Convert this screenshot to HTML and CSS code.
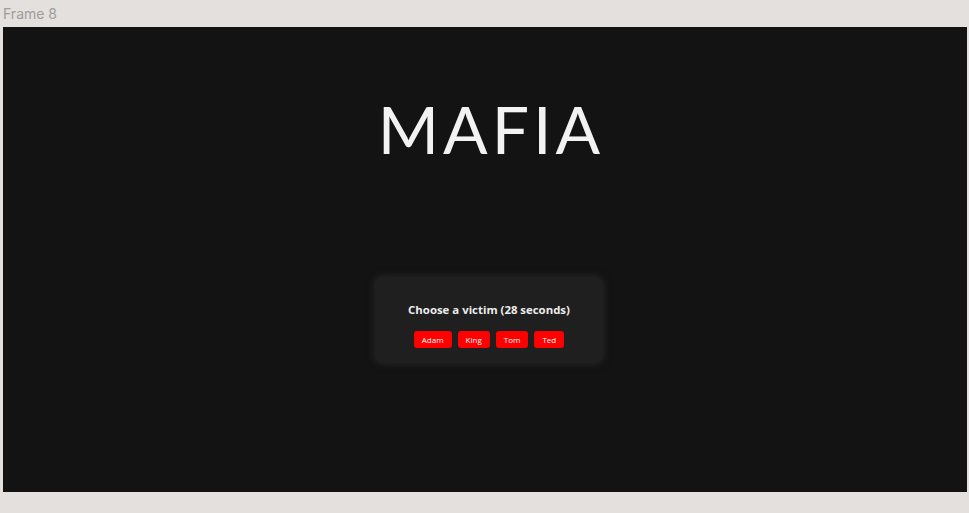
FILE: index.html
```html
<!DOCTYPE html>
<html>
<head>
<meta charset="utf-8">
<link rel="stylesheet" href="styles.css">
</head>
<body>
<div class="label">Frame 8</div>
<div class="frame">
  <h1 class="title">MAFIA</h1>
  <div class="card">
    <div class="prompt">Choose a victim (28 seconds)</div>
    <div class="buttons">
      <button class="btn">Adam</button>
      <button class="btn">King</button>
      <button class="btn">Tom</button>
      <button class="btn">Ted</button>
    </div>
  </div>
</div>
</body>
</html>
```
FILE: styles.css
```css
html, body {
  margin: 0;
  padding: 0;
  background: #e4e0de;
  width: 969px;
  height: 513px;
  overflow: hidden;
}
.label {
  height: 27px;
  padding-left: 3px;
  box-sizing: border-box;
  padding-top: 6px;
  font-family: "Inter", "Liberation Sans", sans-serif;
  font-size: 14px;
  color: #a09d9b;
  line-height: 16px;
}
.frame {
  margin-left: 3px;
  width: 964px;
  height: 465px;
  background: #131313;
  display: flex;
  flex-direction: column;
  align-items: center;
  padding-left: 8px;
  box-sizing: border-box;
}
.title {
  margin: 66px 0 0 0;
  font-family: "Lato", "Open Sans", sans-serif;
  font-weight: 400;
  font-size: 66px;
  line-height: 72px;
  letter-spacing: 4px;
  color: #f2f2f2;
  padding-left: 4px;
}
.card {
  margin-top: 112px;
  width: 228px;
  height: 86px;
  box-sizing: border-box;
  background: #1f1f1f;
  border-radius: 8px;
  box-shadow: 0 0 6px 2px rgba(40,40,40,0.7);
  display: flex;
  flex-direction: column;
  align-items: center;
  padding-top: 25px;
}
.prompt {
  font-family: "Open Sans", "Noto Sans", sans-serif;
  font-weight: 700;
  font-size: 11.4px;
  line-height: 16px;
  color: #ececec;
}
.buttons {
  display: flex;
  gap: 6px;
  margin-top: 13px;
}
.btn {
  border: none;
  background: #ff0000;
  color: #ffffff;
  border-radius: 3px;
  height: 17px;
  padding: 0 8px;
  font-family: "Open Sans", "Noto Sans", sans-serif;
  font-size: 8px;
  line-height: 17px;
}
```
